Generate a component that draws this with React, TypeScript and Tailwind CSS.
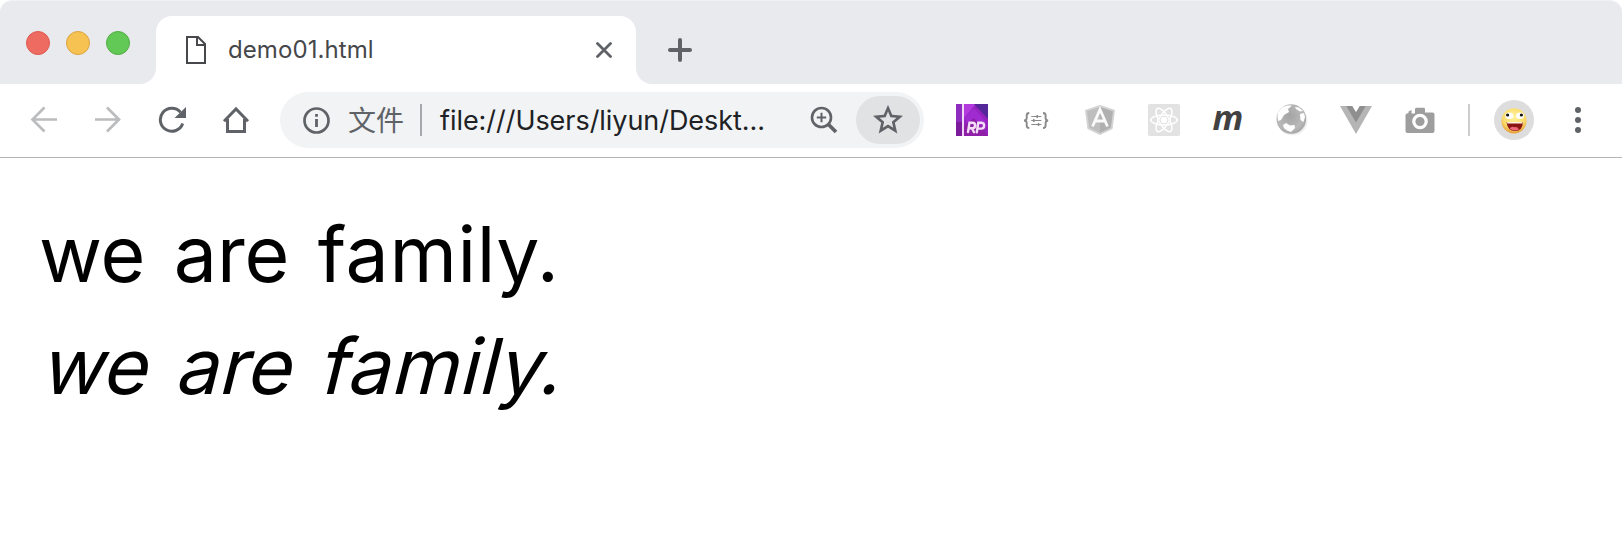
import type { ReactNode } from "react";

function Slot({ children }: { children: ReactNode }) {
  return <div className="flex h-8 w-16 shrink-0 items-center justify-center">{children}</div>;
}

function TrafficLights() {
  return (
    <div className="flex w-[156px] shrink-0 items-start gap-4 rounded-br-[16px] bg-[#e8eaed] pl-[26px] pt-[30px]">
      <div className="size-6 rounded-full border border-[#dc5a50] bg-[#ed6b60]" />
      <div className="size-6 rounded-full border border-[#dba343] bg-[#f6c251]" />
      <div className="size-6 rounded-full border border-[#52ab42] bg-[#62c956]" />
    </div>
  );
}

function TabStrip() {
  return (
    <div className="flex h-[84px] overflow-hidden rounded-t-[12px] border-t border-[#f0f1f3] bg-white">
      <TrafficLights />
      <div className="flex w-[480px] shrink-0 flex-col bg-[#e8eaed]">
        <div className="h-[15px]" />
        <div className="flex h-[68px] items-center rounded-t-[16px] bg-white pl-[30px] pr-6">
          <svg className="h-[28px] w-[20px]" viewBox="0 0 20 28" fill="none" stroke="#47484b" strokeWidth="2">
            <path d="M1 1H12L19 8V27H1Z" />
            <path d="M11 1V9H19" />
          </svg>
          <span className="ml-[22px] font-[Inter] text-[24px] leading-8 tracking-[0.08px] text-[#45474a]">demo01.html</span>
          <svg className="ml-auto size-4" viewBox="0 0 16 16" fill="none" stroke="#5f6368" strokeWidth="2.8" strokeLinecap="round">
            <path d="M1.5 1.5 14.5 14.5M14.5 1.5 1.5 14.5" />
          </svg>
        </div>
      </div>
      <div className="flex grow rounded-bl-[16px] bg-[#e8eaed] pl-8 pt-[37px]">
        <svg className="size-6" viewBox="0 0 24 24" fill="none" stroke="#5f6368" strokeWidth="4" strokeLinecap="round">
          <path d="M12 2V22M2 12H22" />
        </svg>
      </div>
    </div>
  );
}

function Navigation() {
  return (
    <div className="flex">
      <Slot>
        <svg className="size-7" viewBox="0 0 28 28" fill="none" stroke="#babcbe" strokeWidth="2.7">
          <path d="M27 13.5H3M14.5 1.5 2.5 13.5 14.5 25.5" />
        </svg>
      </Slot>
      <Slot>
        <svg className="size-7" viewBox="0 0 28 28" fill="none" stroke="#babcbe" strokeWidth="2.7">
          <path d="M1 13.5H25M13 1.5 25 13.5 13 25.5" />
        </svg>
      </Slot>
      <Slot>
        <svg className="size-7" viewBox="0 0 28 28" fill="none" stroke="#5f6368" strokeWidth="3">
          <path d="M24.7 17.5A11.5 11.5 0 1 1 22.5 6.2" />
          <path d="M28 1V12H16.5Z" fill="#5f6368" stroke="none" />
        </svg>
      </Slot>
      <Slot>
        <svg className="size-7" viewBox="0 0 28 28" fill="none" stroke="#5f6368" strokeWidth="3">
          <path d="M2 15.2 14 3 26 15.2M5.5 13V25.5H22.5V13" />
        </svg>
      </Slot>
    </div>
  );
}

function AddressBar() {
  return (
    <div className="ml-3 flex h-14 w-[644px] shrink-0 items-center rounded-full bg-[#f1f3f4] pl-[23px] pr-1">
      <svg className="size-[27px]" viewBox="0 0 27 27" fill="none" stroke="#5f6368">
        <circle cx="13.5" cy="13.5" r="12" strokeWidth="2.7" />
        <path d="M13.5 12V20M13.5 7V9.7" strokeWidth="2.8" />
      </svg>
      <span className="mb-[2px] ml-[18px] w-14 whitespace-nowrap font-['Noto_Sans_CJK_SC'] text-[28px] leading-8 text-[#5f6368]">文件</span>
      <div className="ml-4 h-8 w-[2px] bg-[#a6a8ab]" />
      <span className="ml-[18px] mt-[2px] whitespace-nowrap font-[Inter] text-[27px] leading-8 tracking-[-0.05px] text-[#202124]">
        file:///Users/liyun/Deskt...
      </span>
      <svg className="ml-auto size-7" viewBox="0 0 28 28" fill="none" stroke="#5f6368">
        <circle cx="11.5" cy="11.5" r="9.5" strokeWidth="2.6" />
        <path d="M11.5 6.8V16.2M6.8 11.5H16.2" strokeWidth="2" />
        <path d="M18 18 26 26" strokeWidth="3.8" />
      </svg>
      <div className="ml-[18px] flex h-12 w-16 items-center justify-center rounded-full bg-[#e1e2e3]">
        <svg className="size-[30px]" viewBox="0 0 24 24" fill="#5f6368">
          <path d="M24 8.6l-8.63-.74L12 -.1 8.63 7.87 0 8.6l6.55 5.68L4.58 22.7 12 18.2l7.42 4.5-1.96-8.42L24 8.6zM12 15.6l-4.2 2.54 1.11-4.78-3.71-3.22 4.9-.42L12 5.2l1.91 4.52 4.9.42-3.71 3.22 1.11 4.78L12 15.6z" />
        </svg>
      </div>
    </div>
  );
}

function Extensions() {
  return (
    <div className="ml-4 flex">
      <Slot>
        <svg className="size-8" viewBox="0 0 32 32">
          <rect width="32" height="32" fill="#9424bd" />
          <path d="M0 0H6V32H0Z" fill="#8f2cc0" />
          <path d="M0 18H6V32H0Z" fill="#7c1c9c" />
          <path d="M8 0H20L8 14Z" fill="#b33add" />
          <path d="M18 0H32V15Z" fill="#55289a" />
          <path d="M8 14 18 4 30 18 18 26Z" fill="#a02bd0" />
          <path d="M8 22 18 14 32 32H8Z" fill="#8e1fa6" />
          <path d="M6 0H8V32H6Z" fill="#efd9f6" />
          <g fill="none" stroke="#f3ddf6" strokeWidth="2.4" strokeLinecap="round">
            <path d="M12 28 13.5 18.8H16.5A2.7 2.7 0 0 1 16.3 24.2H13M16 24.5 18 28.3M20.8 28.3 22.3 18.8H25.5A2.6 2.6 0 0 1 25 24.6H22" />
          </g>
        </svg>
      </Slot>
      <Slot>
        <svg className="h-5 w-[26px]" viewBox="0 0 26 20" fill="none" stroke="#8a8a8a" strokeWidth="1.9">
          <path d="M6.3 3Q3.7 3 3.7 5.5V8Q3.7 10.5 1 10.5 3.7 10.5 3.7 13V15.5Q3.7 18 6.3 18M20 3Q22.6 3 22.6 5.5V8Q22.6 10.5 25.2 10.5 22.6 10.5 22.6 13V15.5Q22.6 18 20 18" />
          <path d="M8.3 6.5H18.3M8.3 10.5H18.3M8.3 14.5H18.3" strokeWidth="1.2" />
          <path d="M14.2 5V8M10.8 9V12M15.5 13V16" strokeWidth="1.5" />
        </svg>
      </Slot>
      <Slot>
        <svg className="size-8" viewBox="0 0 32 32">
          <path d="M16 1 31 6 28.5 25 16 31 3.5 25 1 6Z" fill="#d3d3d3" />
          <path d="M16 3 29 7.2 26.8 23.8 16 29Z" fill="#b0b0b0" />
          <path d="M16 3 3 7.2 5.2 23.8 16 29Z" fill="#bebebe" />
          <path d="M8.5 22.5 16 5.5 23.5 22.5M11.5 17H20.5" fill="none" stroke="#fafafa" strokeWidth="2.8" />
        </svg>
      </Slot>
      <Slot>
        <svg className="size-8" viewBox="0 0 32 32" fill="none" stroke="#fff" strokeWidth="1.5">
          <rect width="32" height="32" rx="2" fill="#e2e2e2" stroke="none" />
          <ellipse cx="16" cy="16" rx="13.3" ry="5" />
          <ellipse cx="16" cy="16" rx="13.3" ry="5" transform="rotate(60 16 16)" />
          <ellipse cx="16" cy="16" rx="13.3" ry="5" transform="rotate(120 16 16)" />
          <circle cx="16" cy="16" r="2.5" fill="#fff" />
        </svg>
      </Slot>
      <Slot>
        <span className="-mt-[6px] font-['Open_Sans'] text-[34px] leading-8 font-bold italic text-[#414141]">m</span>
      </Slot>
      <Slot>
        <svg className="size-8" viewBox="0 0 32 32">
          <defs>
            <radialGradient id="sea" cx="45%" cy="40%" r="60%">
              <stop offset="0" stopColor="#a4a4a4" />
              <stop offset="0.75" stopColor="#b9b9b9" />
              <stop offset="1" stopColor="#a6a6a6" />
            </radialGradient>
          </defs>
          <circle cx="16.5" cy="16.5" r="15" fill="#eeeeee" />
          <circle cx="15.3" cy="15" r="14.8" fill="url(#sea)" />
          <path d="M2 8 6 3.5 11 1.5 16 1.5 12 5 13 8 8 11 5 16 2 17 1.5 12ZM7 21 10 19 14 21.5 18.5 21 19 24 15 28 11 26.5 8 24ZM24 10 28 9 29 13 27.5 18 24.5 16ZM19 3 23 3.5 27 7 24 7.5 20 5Z" fill="#fff" />
        </svg>
      </Slot>
      <Slot>
        <svg className="h-7 w-8" viewBox="0 0 32 28">
          <path d="M0 0H32L16 28Z" fill="#b5b5b5" />
          <path d="M6.3 0H12.5L16 6 19.5 0H25.7L16 16.5Z" fill="#8f8f8f" />
          <path d="M12.3 0H19.7L16 6Z" fill="#fff" />
        </svg>
      </Slot>
      <Slot>
        <svg className="h-7 w-[30px]" viewBox="0 0 30 28">
          <path d="M3.5 5.5 6.5 4V7.5H10V3.2Q10 1.8 11.5 1.8H18.5Q20 1.8 20 3.2V6.5H27.5Q29.5 6.5 29.5 8.5V25Q29.5 27 27.5 27H2.5Q.5 27 .5 25V9Q.5 7.5 3.5 7Z" fill="#9e9e9e" />
          <circle cx="15" cy="15.5" r="6.2" fill="none" stroke="#fff" strokeWidth="3.2" />
        </svg>
      </Slot>
    </div>
  );
}

function Profile() {
  return (
    <div className="flex items-center">
      <div className="ml-4 h-8 w-[2px] bg-[#cccdcf]" />
      <div className="ml-6 flex size-10 items-center justify-center rounded-full bg-[#dddddd]">
        <svg className="size-7" viewBox="0 0 28 28">
          <defs>
            <radialGradient id="face" cx="50%" cy="35%" r="65%">
              <stop offset="0" stopColor="#fff39a" />
              <stop offset="0.7" stopColor="#f9d968" />
              <stop offset="1" stopColor="#e79a35" />
            </radialGradient>
          </defs>
          <circle cx="14" cy="14.8" r="12.6" fill="url(#face)" />
          <ellipse cx="9.3" cy="9.8" rx="4" ry="3.2" fill="#fff" />
          <ellipse cx="20" cy="9.8" rx="4" ry="3.2" fill="#fff" />
          <circle cx="7.6" cy="9" r="1.6" fill="#171310" />
          <circle cx="21.4" cy="9" r="1.6" fill="#171310" />
          <path d="M6.5 16H23Q22.5 25 15 25 7.5 25 6.5 16Z" fill="#8b1512" />
          <path d="M7 16H22.5V17.4H7.3Z" fill="#fff4e0" />
          <path d="M9.5 22.5Q12 19.5 14.5 21.3 17 20.3 19 23.2 14 26 9.5 22.5Z" fill="#ed6878" />
        </svg>
      </div>
      <div className="ml-[41px] flex flex-col gap-1">
        <div className="size-[6px] rounded-full bg-[#5f6368]" />
        <div className="size-[6px] rounded-full bg-[#5f6368]" />
        <div className="size-[6px] rounded-full bg-[#5f6368]" />
      </div>
    </div>
  );
}

function Phrase() {
  return (
    <>
      we are <span className="tracking-[0.6px]">family.</span>
    </>
  );
}

export default function App() {
  return (
    <div className="h-[544px] w-[1622px] overflow-hidden bg-white">
      <TabStrip />
      <div className="flex h-[74px] items-start border-b border-[#b3b5b7] bg-white">
        <div className="flex h-[72px] items-center pl-3">
          <Navigation />
          <AddressBar />
          <Extensions />
          <Profile />
        </div>
      </div>
      <main className="pl-[39px] pt-10 font-[Inter] text-[77px] leading-[112px] text-black [word-spacing:6.5px]">
        <p>
          <Phrase />
        </p>
        <p className="origin-[0_84px] -skew-x-[14deg]">
          <Phrase />
        </p>
      </main>
    </div>
  );
}
